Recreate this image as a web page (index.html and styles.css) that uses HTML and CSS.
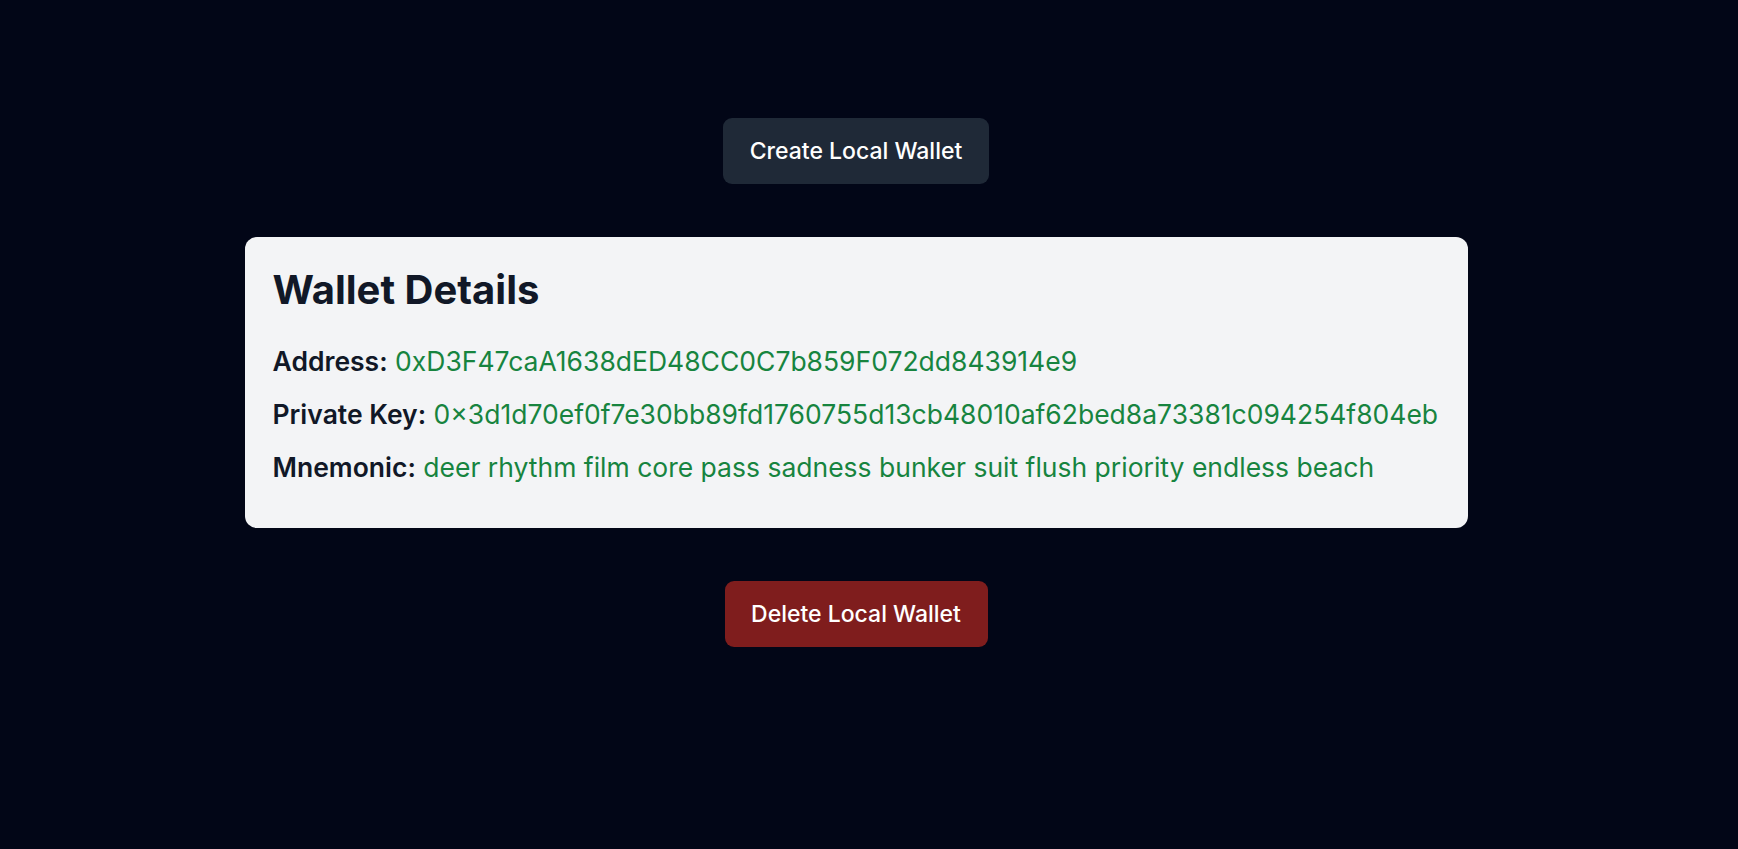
FILE: index.html
```html
<!DOCTYPE html>
<html lang="en">
<head>
<meta charset="utf-8">
<title>Local Wallet</title>
<link rel="stylesheet" href="styles.css">
</head>
<body>
<main class="page">
  <button class="btn btn-create" type="button">Create Local Wallet</button>
  <section class="card">
    <h2 class="card-title">Wallet Details</h2>
    <p class="row"><span class="label">Address:</span> <span class="value">0xD3F47caA1638dED48CC0C7b859F072dd843914e9</span></p>
    <p class="row"><span class="label">Private Key:</span> <span class="value">0×3d1d70ef0f7e30bb89fd1760755d13cb48010af62bed8a73381c094254f804eb</span></p>
    <p class="row"><span class="label">Mnemonic:</span> <span class="value">deer rhythm film core pass sadness bunker suit flush priority endless beach</span></p>
  </section>
  <button class="btn btn-delete" type="button">Delete Local Wallet</button>
</main>
</body>
</html>
```
FILE: styles.css
```css
html, body {
  margin: 0;
  padding: 0;
  background: #020617;
  min-height: 100%;
}
body {
  font-family: Inter, "Noto Sans", "Liberation Sans", sans-serif;
  height: 849px;
  overflow: hidden;
}
.page {
  width: 1712px;
  display: flex;
  flex-direction: column;
  align-items: center;
  padding-top: 118px;
}
.btn {
  border: none;
  border-radius: 9px;
  font-family: inherit;
  font-size: 23px;
  font-weight: 500;
  color: #ffffff;
  line-height: 29px;
  padding: 0;
  cursor: pointer;
}
.btn-create {
  background: #1f2937;
  height: 66px;
  width: 266px;
}
.btn-delete {
  background: #7f1d1d;
  height: 66px;
  width: 263px;
  margin-top: 53px;
}
.card {
  margin-top: 53px;
  width: 1223px;
  box-sizing: border-box;
  background: #f3f4f6;
  border-radius: 12px;
  padding: 29px 28px 26px;
}
.card-title {
  margin: 0 0 29px;
  font-size: 40px;
  line-height: 48px;
  font-weight: 700;
  color: #111827;
}
.row {
  margin: 0 0 17px;
  font-size: 26.5px;
  line-height: 36px;
  color: #111827;
}
.label {
  font-weight: 600;
}
.value {
  color: #17843f;
}
```
